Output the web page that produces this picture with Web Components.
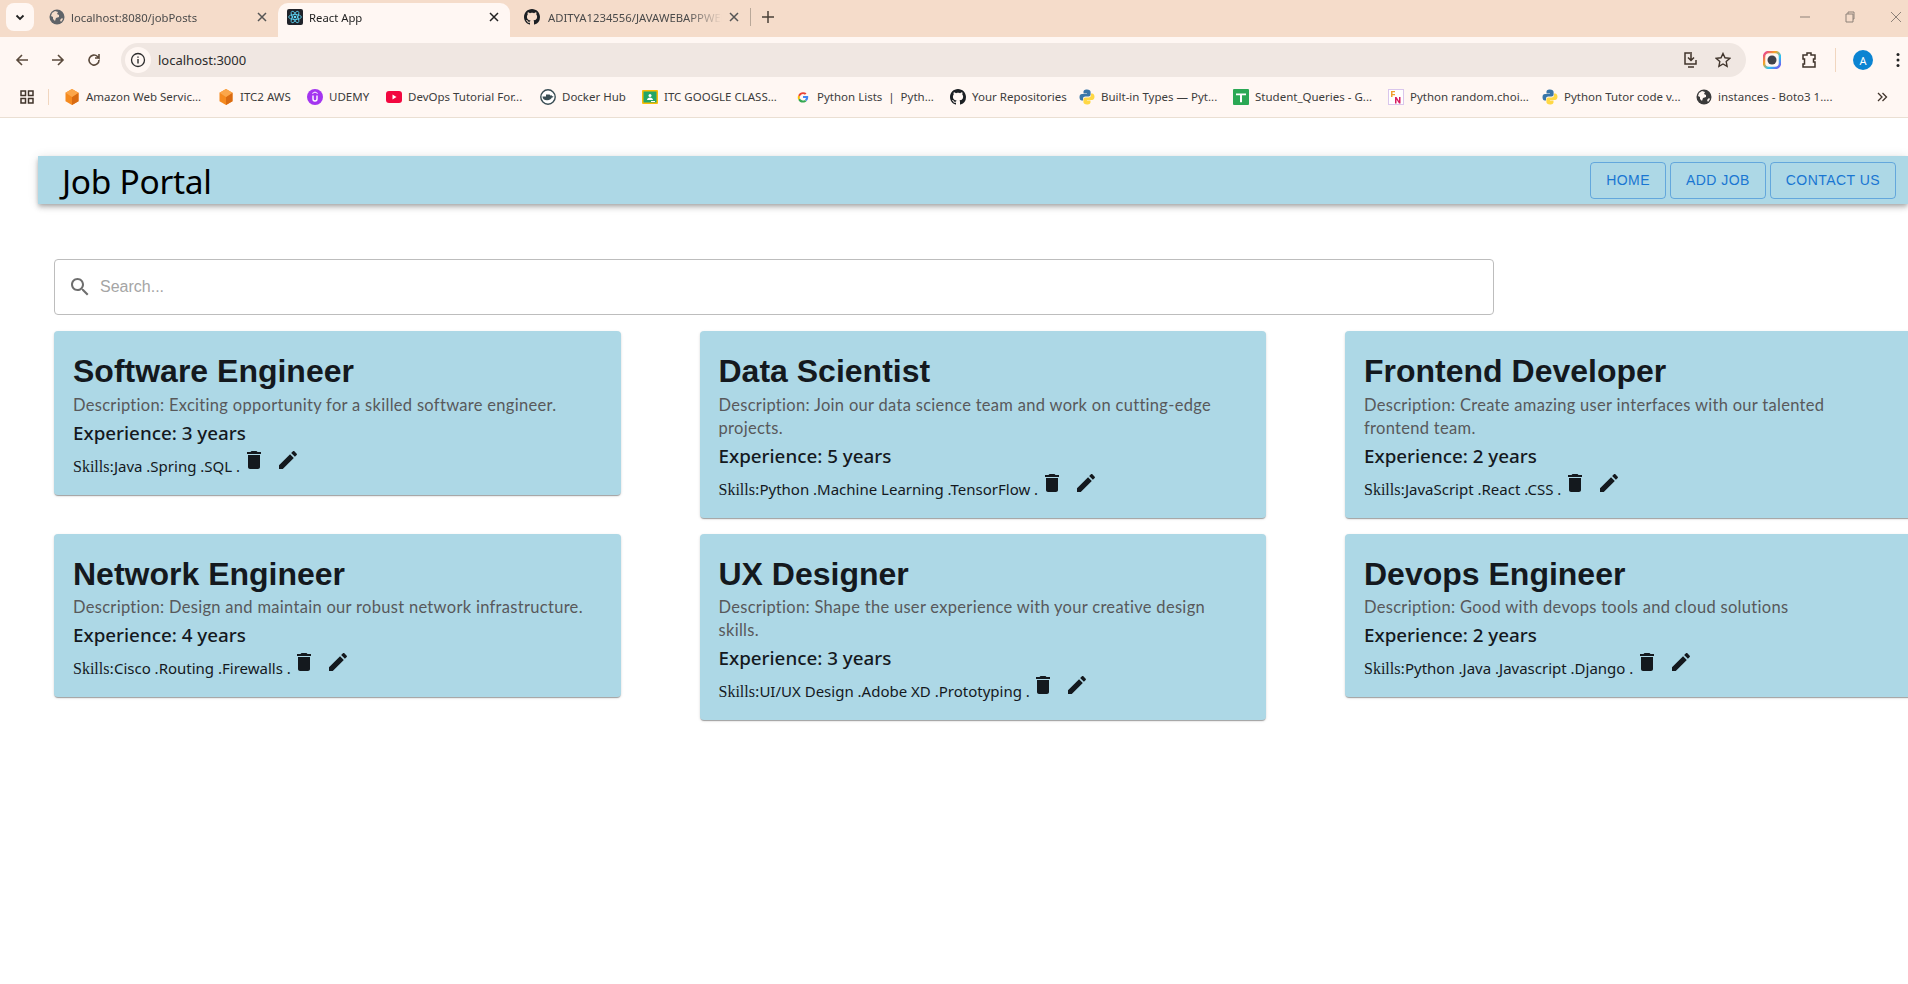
<!DOCTYPE html>
<html>
<head>
<meta charset="utf-8">
<title>React App</title>
<style>
html, body { margin: 0; padding: 0; background: #fff; overflow: hidden; height: 984px; }
body { font-family: "Liberation Sans", sans-serif; }
</style>
</head>
<body>
<browser-chrome></browser-chrome>
<job-page></job-page>

<script>
const ICONS = {
  globe: `<svg viewBox="0 0 16 16" width="16" height="16"><circle cx="8" cy="8" r="7.5" fill="#5f6368"/><path d="M3 4l3-2 3 1-1 2 2 1 0 2-3 1-1 3-2-2 0-2-2-1zM11 11l2-2 1 1-2 3z" fill="#f5dcca"/></svg>`,
  react: `<svg viewBox="0 0 16 16" width="16" height="16"><rect width="16" height="16" rx="2" fill="#20232a"/><g fill="none" stroke="#61dafb" stroke-width=".8"><ellipse cx="8" cy="8" rx="6.4" ry="2.5"/><ellipse cx="8" cy="8" rx="6.4" ry="2.5" transform="rotate(60 8 8)"/><ellipse cx="8" cy="8" rx="6.4" ry="2.5" transform="rotate(120 8 8)"/></g><circle cx="8" cy="8" r="1.3" fill="#61dafb"/></svg>`,
  github: `<svg viewBox="0 0 16 16" width="16" height="16"><path fill="#1b1f23" d="M8 0C3.58 0 0 3.58 0 8c0 3.54 2.29 6.53 5.47 7.59.4.07.55-.17.55-.38 0-.19-.01-.82-.01-1.49-2.01.37-2.53-.49-2.69-.94-.09-.23-.48-.94-.82-1.13-.28-.15-.68-.52-.01-.53.63-.01 1.08.58 1.23.82.72 1.21 1.87.87 2.33.66.07-.52.28-.87.51-1.07-1.78-.2-3.64-.89-3.64-3.95 0-.87.31-1.59.82-2.15-.08-.2-.36-1.02.08-2.12 0 0 .67-.21 2.2.82.64-.18 1.32-.27 2-.27s1.36.09 2 .27c1.53-1.04 2.2-.82 2.2-.82.44 1.1.16 1.92.08 2.12.51.56.82 1.27.82 2.15 0 3.07-1.87 3.75-3.65 3.95.29.25.54.73.54 1.48 0 1.07-.01 1.93-.01 2.2 0 .21.15.46.55.38A8.01 8.01 0 0016 8c0-4.42-3.58-8-8-8z"/></svg>`,
  aws: `<svg viewBox="0 0 16 16" width="16" height="16"><path d="M8 0l6.5 3.8v8.4L8 16l-6.5-3.8V3.8z" fill="#f58a1f"/><path d="M8 8l6.5-4.2v8.4L8 16z" fill="#d96b12"/><path d="M8 0l6.5 3.8L8 8 1.5 3.8z" fill="#fba64a"/></svg>`,
  udemy: `<svg viewBox="0 0 16 16" width="16" height="16"><circle cx="8" cy="8" r="8" fill="#a435f0"/><path d="M5.3 6.5v3.6a2.7 2.7 0 005.4 0V6.5H9.3v3.5a1.3 1.3 0 01-2.6 0V6.5z" fill="#fff"/><path d="M8 2.5l2.7 1.6v.9L8 3.5 5.3 5v-.9z" fill="#fff"/></svg>`,
  youtube: `<svg viewBox="0 0 16 16" width="16" height="16"><rect y="2" width="16" height="12" rx="3" fill="#f2073f"/><path d="M6.5 5.5v5l4-2.5z" fill="#fff"/></svg>`,
  docker: `<svg viewBox="0 0 16 16" width="16" height="16"><circle cx="8" cy="8" r="7.2" fill="#fff" stroke="#394d54" stroke-width="1.4"/><path d="M2.5 8.5h9.5c.8 0 1.2-.6 1.5-1-.4-.3-1-.4-1.5-.2-.1-.6-.5-1-.9-1.3l-.5.7-1-1.2H6v2H2.5c0 2.2 1.500 3.800 4.500 3.800 3 0 4.500-1.600 5-3z" fill="#394d54"/></svg>`,
  classroom: `<svg viewBox="0 0 16 16" width="16" height="16"><rect x="0" y="1" width="16" height="14" rx="1" fill="#fbbc04"/><rect x="1.500" y="2.500" width="13" height="11" fill="#25a667"/><circle cx="8" cy="6.500" r="1.500" fill="#fff"/><path d="M5 11c0-1.500 1.500-2.500 3-2.500s3 1 3 2.500z" fill="#fff"/><rect x="9" y="12" width="4" height="1" fill="#fff"/></svg>`,
  google: `<svg viewBox="0 0 16 16" width="16" height="16"><g transform="translate(1.600 1.600) scale(.8)"><path d="M14.500 8.200c0-.5 0-.9-.1-1.300H8v2.500h3.700c-.2.800-.6 1.500-1.300 2l2 1.600c1.300-1.200 2.100-2.900 2.100-4.800z" fill="#4285f4"/><path d="M8 15c1.800 0 3.300-.6 4.400-1.600l-2-1.600c-.6.400-1.400.7-2.400.7-1.800 0-3.300-1.200-3.800-2.800l-2.100 1.600C3.200 13.500 5.400 15 8 15z" fill="#34a853"/><path d="M4.200 9.700c-.3-.8-.3-1.600 0-2.400L2.100 5.700c-.9 1.700-.9 3.900 0 5.600z" fill="#fbbc05"/><path d="M8 4.300c1 0 1.800.3 2.500 1l1.900-1.900C11.300 2.500 9.800 2 8 2 5.400 2 3.200 3.500 2.100 5.700l2.100 1.600C4.700 5.600 6.200 4.300 8 4.300z" fill="#ea4335"/></g></svg>`,
  python: `<svg viewBox="0 0 16 16" width="16" height="16"><path d="M8 .5c-3 0-3.500 1.300-3.500 2.500v1.500H8V5H3C1.500 5 .5 6.200.5 8.200s1 3.300 2.300 3.300H4V9.700c0-1.300 1.100-2.200 2.300-2.200h3.300c1.100 0 2-.9 2-2V3C11.600 1.500 10.300.5 8 .5z" fill="#3a76a8"/><path d="M8 15.500c3 0 3.500-1.300 3.500-2.500v-1.500H8V11h5c1.500 0 2.500-1.200 2.500-3.200s-1-3.300-2.300-3.300H12v1.800c0 1.300-1.100 2.200-2.300 2.200H6.400c-1.100 0-2 .9-2 2V13c0 1.500 1.300 2.500 3.600 2.500z" fill="#ffd845"/></svg>`,
  sheets: `<svg viewBox="0 0 16 16" width="16" height="16"><rect width="16" height="16" rx="1" fill="#2aa854"/><path d="M3 4.500h10v1.800H9v7H7v-7H3z" fill="#fff"/></svg>`,
  pynative: `<svg viewBox="0 0 16 16" width="16" height="16"><rect x=".5" y=".5" width="15" height="15" fill="#fff" stroke="#d9c6ec"/><path d="M3 2h4v1.300H4.500V5H7v1.300H4.500V8H3z" fill="#f0a030"/><path d="M7 8h1.500l2.500 4V8h1.500v6.500H11L8.500 10.500v4H7z" fill="#d81b60"/></svg>`,
  boto: `<svg viewBox="0 0 16 16" width="16" height="16"><circle cx="8" cy="8" r="7.500" fill="#3a3a3a"/><path d="M3 4l3-2 3 1-1 2 2 1 0 2-3 1-1 3-2-2 0-2-2-1zM11 11l2-2 1 1-2 3z" fill="#fff7f3"/></svg>`
};

const MUI = {
  del: 'M6 19c0 1.100.9 2 2 2h8c1.100 0 2-.9 2-2V7H6v12zM19 4h-3.500l-1-1h-5l-1 1H5v2h14V4z',
  edit: 'M3 17.250V21h3.750L17.810 9.940l-3.750-3.750L3 17.250zM20.710 7.040c.39-.39.39-1.020 0-1.410l-2.340-2.340c-.39-.39-1.020-.39-1.410 0l-1.830 1.830 3.750 3.750 1.830-1.830z',
  search: 'M15.500 14h-.79l-.28-.27C15.410 12.590 16 11.110 16 9.500 16 5.910 13.090 3 9.500 3S3 5.910 3 9.500 5.910 16 9.500 16c1.610 0 3.090-.59 4.230-1.570l.27.28v.79l5 4.990L20.490 19l-4.990-5zm-6 0C7.010 14 5 11.990 5 9.500S7.010 5 9.500 5 14 7.010 14 9.500 11.990 14 9.500 14z'
};

class BrowserTab extends HTMLElement {
  connectedCallback() {
    const active = this.hasAttribute('active');
    const root = this.attachShadow({ mode: 'open' });
    root.innerHTML = `
    <style>
    :host {
      display: flex;
      align-items: center;
      box-sizing: border-box;
      height: 34px;
      margin-top: 3px;
      padding: 0 0 6px 9px;
      width: var(--tab-width);
      font-size: 11.300px;
      color: ${active ? '#1f1f1f' : '#4a4a4a'};
    }
    :host([active]) {
      background: #fff7f3;
      border-radius: 10px 10px 0 0;
    }
    .title {
      flex: 1;
      margin-left: 6px;
      white-space: nowrap;
      overflow: hidden;
      -webkit-mask-image: linear-gradient(to right, #000 80%, transparent);
    }
    .close { width: 12px; height: 12px; margin-right: 10px; margin-left: 6px; }
    </style>
    ${ICONS[this.getAttribute('icon')]}
    <span class="title"><slot></slot></span>
    <svg class="close" viewBox="0 0 12 12"><path d="M2 2l8 8M10 2l-8 8" stroke="${active ? '#222' : '#555'}" stroke-width="1.500" fill="none"/></svg>`;
  }
}
customElements.define('browser-tab', BrowserTab);

class BookmarkItem extends HTMLElement {
  connectedCallback() {
    const root = this.attachShadow({ mode: 'open' });
    root.innerHTML = `
    <style>
    :host {
      display: flex;
      align-items: center;
      gap: 6px;
      width: ${this.getAttribute('w')}px;
      flex: none;
      font-size: 11.500px;
      color: #3c3c3c;
      white-space: nowrap;
    }
    svg { flex: none; }
    </style>
    ${ICONS[this.getAttribute('icon')]}<slot></slot>`;
  }
}
customElements.define('bookmark-item', BookmarkItem);

const chromeTemplate = document.createElement('template');
chromeTemplate.innerHTML = `
<style>
:host {
  display: block;
  font-family: "Noto Sans", "Open Sans", sans-serif;
  --bar: #fff7f3;
}
.tabstrip {
  display: flex;
  height: 37px;
  background: #f5dcca;
  align-items: flex-start;
}
.tab-list-btn {
  width: 28px;
  height: 28px;
  margin: 3px 8px 0 6px;
  background: #fff7f3;
  border-radius: 8px;
  display: flex;
  align-items: center;
  justify-content: center;
  flex: none;
}
.sep { width: 1px; height: 18px; background: #b9a899; margin: 8px 10px 0 0; }
.new-tab { margin-top: 10px; }
.win { margin-left: auto; display: flex; gap: 33px; padding: 10px 5px 0 0; }
.toolbar {
  display: flex;
  align-items: center;
  height: 47px;
  background: var(--bar);
  padding: 0 0 1px 14px;
  box-sizing: border-box;
}
.nav { margin-right: 20px; flex: none; }
.omni {
  flex: none;
  width: 1625px;
  height: 34px;
  margin-left: -1px;
  background: #f0e7e2;
  border-radius: 17px;
  display: flex;
  align-items: center;
  box-sizing: border-box;
  padding: 0 15px 0 4px;
  font-size: 13px;
  color: #2c2c2c;
}
.info {
  width: 26px;
  height: 26px;
  border-radius: 50%;
  background: #fff7f3;
  display: flex;
  align-items: center;
  justify-content: center;
  margin-right: 7px;
}
.omni-end { margin-left: auto; display: flex; gap: 15px; align-items: center; }
.tools { display: flex; align-items: center; margin-left: 17px; }
.avatar {
  width: 20px;
  height: 20px;
  border-radius: 50%;
  background: #0b84d2;
  color: #fff;
  font-size: 11px;
  display: flex;
  align-items: center;
  justify-content: center;
}
.bookmarks {
  display: flex;
  align-items: center;
  height: 34px;
  background: var(--bar);
  border-bottom: 1px solid #eadfd3;
  box-sizing: border-box;
  padding: 0 0 8px 19px;
}
.apps { margin-right: 13px; flex: none; }
.vline { width: 1px; height: 16px; background: #f1d6bf; margin-right: 15px; flex: none; }
</style>
<div class="tabstrip">
  <div class="tab-list-btn">
    <svg width="12" height="12" viewBox="0 0 12 12"><path d="M2.500 4.500L6 8l3.500-3.500" fill="none" stroke="#222" stroke-width="1.800"/></svg>
  </div>
  <browser-tab icon="globe" style="--tab-width:236px;padding-left:7px">localhost:8080/jobPosts</browser-tab>
  <browser-tab icon="react" active style="--tab-width:232px">React App</browser-tab>
  <browser-tab icon="github" style="--tab-width:240px;padding-left:14px"><span style="padding-left:2px">ADITYA1234556/JAVAWEBAPPWEB</span></browser-tab>
  <div class="sep"></div>
  <svg class="new-tab" width="14" height="14" viewBox="0 0 14 14"><path d="M7 1v12M1 7h12" stroke="#4a4038" stroke-width="1.500"/></svg>
  <div class="win">
    <svg width="12" height="14" viewBox="0 0 12 14"><path d="M1 7h10" stroke="#8d8178"/></svg>
    <svg width="12" height="14" viewBox="0 0 12 14"><path d="M2 4h7v8H2zM4 4V2h6v7H9" fill="none" stroke="#8d8178"/></svg>
    <svg width="14" height="14" viewBox="0 0 14 14"><path d="M2 2l10 10M12 2L2 12" stroke="#8d8178"/></svg>
  </div>
</div>
<div class="toolbar">
  <svg class="nav" width="16" height="16" viewBox="0 0 16 16"><path d="M14 8H3M8 3L3 8l5 5" fill="none" stroke="#5b4a3c" stroke-width="1.600"/></svg>
  <svg class="nav" width="16" height="16" viewBox="0 0 16 16"><path d="M2 8h11M8 3l5 5-5 5" fill="none" stroke="#5b4a3c" stroke-width="1.600"/></svg>
  <svg class="nav" width="16" height="16" viewBox="0 0 16 16"><path d="M13 8a5 5 0 11-1.500-3.500L13 6V2M13 6H9" fill="none" stroke="#5b4a3c" stroke-width="1.600"/></svg>
  <div class="omni">
    <div class="info"><svg width="16" height="16" viewBox="0 0 16 16"><circle cx="8" cy="8" r="6.500" fill="none" stroke="#2c2c2c" stroke-width="1.300"/><path d="M8 7v4.500M8 4.500v1.300" stroke="#2c2c2c" stroke-width="1.400"/></svg></div>
    localhost:3000
    <div class="omni-end">
      <svg width="18" height="18" viewBox="0 0 18 18"><path d="M8 2H3v11h11V9M9 1v8M6 6.500L9 9.500l3-3M6 16h6" fill="none" stroke="#40342b" stroke-width="1.500"/></svg>
      <svg width="16" height="16" viewBox="0 0 16 16"><path d="M8 1.500l2 4.300 4.700.6-3.500 3.200.9 4.700L8 12l-4.100 2.300.9-4.700L1.300 6.400 6 5.800z" fill="none" stroke="#40342b" stroke-width="1.400"/></svg>
    </div>
  </div>
  <div class="tools">
    <svg width="18" height="18" viewBox="0 0 18 18" style="margin-right:20px"><rect x="1" y="1" width="16" height="16" rx="5" fill="none" stroke="url(#rb)" stroke-width="2.500"/><defs><linearGradient id="rb" x1="0" y1="0" x2="1" y2="1"><stop offset="0" stop-color="#e6399b"/><stop offset=".35" stop-color="#f5a623"/><stop offset=".65" stop-color="#27c4f5"/><stop offset="1" stop-color="#7b4cf0"/></linearGradient></defs><circle cx="9" cy="9" r="4.500" fill="#40424a"/></svg>
    <svg width="16" height="18" viewBox="0 0 16 18" style="margin-right:18px"><path d="M2 4h4V2h4v2h4v4h-1.500v3H14v5H2v-3h1.500V8H2z" fill="none" stroke="#40342b" stroke-width="1.500"/></svg>
    <div style="width:1px;height:24px;background:#f1d6bf;margin-right:17px"></div>
    <div class="avatar">A</div>
    <svg width="4" height="16" viewBox="0 0 4 16" style="margin-left:23px"><circle cx="2" cy="2.500" r="1.500" fill="#222"/><circle cx="2" cy="8" r="1.500" fill="#222"/><circle cx="2" cy="13.500" r="1.500" fill="#222"/></svg>
  </div>
</div>
<div class="bookmarks">
  <svg class="apps" width="16" height="16" viewBox="0 0 16 16"><path d="M2 2h4.500v4.500H2zM9.500 2H14v4.500H9.500zM2 9.500h4.500V14H2zM9.500 9.500H14V14H9.500z" fill="none" stroke="#40342b" stroke-width="1.500"/></svg>
  <div class="vline"></div>
  <bookmark-item icon="aws" w="154">Amazon Web Servic...</bookmark-item>
  <bookmark-item icon="aws" w="89">ITC2 AWS</bookmark-item>
  <bookmark-item icon="udemy" w="79">UDEMY</bookmark-item>
  <bookmark-item icon="youtube" w="154">DevOps Tutorial For...</bookmark-item>
  <bookmark-item icon="docker" w="102">Docker Hub</bookmark-item>
  <bookmark-item icon="classroom" w="153">ITC GOOGLE CLASS...</bookmark-item>
  <bookmark-item icon="google" w="155">Python Lists&nbsp;&nbsp;|&nbsp;&nbsp;Pyth...</bookmark-item>
  <bookmark-item icon="github" w="129">Your Repositories</bookmark-item>
  <bookmark-item icon="python" w="154">Built-in Types — Pyt...</bookmark-item>
  <bookmark-item icon="sheets" w="155">Student_Queries - G...</bookmark-item>
  <bookmark-item icon="pynative" w="154">Python random.choi...</bookmark-item>
  <bookmark-item icon="python" w="154">Python Tutor code v...</bookmark-item>
  <bookmark-item icon="boto" w="150">instances - Boto3 1....</bookmark-item>
  <svg width="12" height="12" viewBox="0 0 12 12" style="margin-left:30px"><path d="M2 2l4 4-4 4M6.500 2l4 4-4 4" fill="none" stroke="#40342b" stroke-width="1.300"/></svg>
</div>`;

class BrowserChrome extends HTMLElement {
  constructor() {
    super();
    this.root = this.attachShadow({ mode: 'open' });
    this.root.appendChild(chromeTemplate.content.cloneNode(true));
  }
}
customElements.define('browser-chrome', BrowserChrome);

class NavButton extends HTMLElement {
  constructor() {
    super();
    const root = this.attachShadow({ mode: 'open' });
    root.innerHTML = `
    <style>
    :host {
      display: block;
      box-sizing: border-box;
      padding: 5px 15px;
      border: 1px solid rgba(25, 118, 210, .5);
      border-radius: 4px;
      font: 14px/25px "Liberation Sans", sans-serif;
      letter-spacing: .45px;
      color: #1976d2;
      text-transform: uppercase;
    }
    </style>
    <slot></slot>`;
  }
}
customElements.define('nav-button', NavButton);

const headerTemplate = document.createElement('template');
headerTemplate.innerHTML = `
<style>
:host {
  display: flex;
  align-items: center;
  justify-content: space-between;
  height: 48px;
  margin: 38px 0 0 38px;
  padding: 0 12px 0 24px;
  background: #add8e6;
  box-shadow: 0 2px 4px -1px rgba(0,0,0,.2), 0 4px 5px 0 rgba(0,0,0,.14), 0 1px 10px 0 rgba(0,0,0,.12);
}
h1 {
  margin: 0;
  font: 400 33.500px/48px "Noto Sans", sans-serif;
  letter-spacing: -.3px;
  color: #000;
  padding-top: 2px;
}
nav { display: flex; gap: 4px; }
</style>
<h1>Job Portal</h1>
<nav>
  <nav-button>Home</nav-button>
  <nav-button>Add Job</nav-button>
  <nav-button>Contact Us</nav-button>
</nav>`;

class JobHeader extends HTMLElement {
  constructor() {
    super();
    this.attachShadow({ mode: 'open' }).appendChild(headerTemplate.content.cloneNode(true));
  }
}
customElements.define('job-header', JobHeader);

class SearchBox extends HTMLElement {
  constructor() {
    super();
    const root = this.attachShadow({ mode: 'open' });
    root.innerHTML = `
    <style>
    :host {
      display: flex;
      align-items: center;
      box-sizing: border-box;
      width: 1440px;
      height: 56px;
      margin: 55px 0 16px 54px;
      padding-left: 13px;
      border: 1px solid #bdbdbd;
      border-radius: 4px;
      background: #fff;
    }
    svg { width: 24px; height: 24px; fill: #6e6e6e; margin-right: 8px; }
    span { font: 16px "Liberation Sans", sans-serif; color: #a5a5a5; }
    </style>
    <svg viewBox="0 0 24 24"><path d="${MUI.search}"/></svg>
    <span>Search...</span>`;
  }
}
customElements.define('search-box', SearchBox);

const cardTemplate = document.createElement('template');
cardTemplate.innerHTML = `
<style>
:host {
  display: block;
  box-sizing: border-box;
  padding: 20px 19px 14.500px;
  background: #add8e6;
  border-radius: 4px;
  box-shadow: 0 2px 1px -1px rgba(0,0,0,.2), 0 1px 1px 0 rgba(0,0,0,.14), 0 1px 3px 0 rgba(0,0,0,.12);
  color: #14191e;
}
h2 {
  margin: 0 0 2.500px;
  font: bold 32px/40px "Liberation Sans", sans-serif;
}
.desc {
  font: 16.500px/23px Lato, sans-serif;
  letter-spacing: .3px;
  color: #58595b;
}
.exp {
  margin-top: 2px;
  font: 500 18.800px/28px "Noto Sans", sans-serif;
}
.skills {
  display: flex;
  align-items: flex-start;
  height: 33.500px;
  font: 15px/24px "Noto Sans", sans-serif;
  white-space: nowrap;
}
.skills .text { margin-top: 7px; }
.label { font: 16px/24px "Liberation Serif", serif; }
svg { width: 24px; height: 24px; fill: #14191e; flex: none; margin-top: 1px; }
.del { margin-left: 1.500px; }
.edit { margin-left: 10px; }
</style>
<h2 id="title"></h2>
<div class="desc" id="desc"></div>
<div class="exp" id="exp"></div>
<div class="skills">
  <span class="text"><span class="label">Skills:</span><span id="skills"></span></span>
  <svg class="del" viewBox="0 0 24 24"><path d="${MUI.del}"/></svg>
  <svg class="edit" viewBox="0 0 24 24"><path d="${MUI.edit}"/></svg>
</div>`;

class JobCard extends HTMLElement {
  constructor() {
    super();
    this.root = this.attachShadow({ mode: 'open' });
    this.root.appendChild(cardTemplate.content.cloneNode(true));
  }

  set post(post) {
    this.root.getElementById('title').textContent = post.title;
    this.root.getElementById('desc').textContent = 'Description: ' + post.desc;
    this.root.getElementById('exp').textContent = 'Experience: ' + post.exp + ' years';
    this.root.getElementById('skills').textContent = post.skills.map(s => s + ' .').join('');
  }
}
customElements.define('job-card', JobCard);

const POSTS = [
  { title: 'Software Engineer', desc: 'Exciting opportunity for a skilled software engineer.', exp: 3, skills: ['Java', 'Spring', 'SQL'] },
  { title: 'Data Scientist', desc: 'Join our data science team and work on cutting-edge projects.', exp: 5, skills: ['Python', 'Machine Learning', 'TensorFlow'] },
  { title: 'Frontend Developer', desc: 'Create amazing user interfaces with our talented frontend team.', exp: 2, skills: ['JavaScript', 'React', 'CSS'] },
  { title: 'Network Engineer', desc: 'Design and maintain our robust network infrastructure.', exp: 4, skills: ['Cisco', 'Routing', 'Firewalls'] },
  { title: 'UX Designer', desc: 'Shape the user experience with your creative design skills.', exp: 3, skills: ['UI/UX Design', 'Adobe XD', 'Prototyping'] },
  { title: 'Devops Engineer', desc: 'Good with devops tools and cloud solutions', exp: 2, skills: ['Python', 'Java', 'Javascript', 'Django'] }
];

class JobPage extends HTMLElement {
  constructor() {
    super();
    const root = this.attachShadow({ mode: 'open' });
    root.innerHTML = `
    <style>
    :host { display: block; }
    .grid {
      display: grid;
      grid-template-columns: repeat(3, 566.500px);
      column-gap: 79px;
      row-gap: 16px;
      align-items: start;
      margin-left: 54px;
    }
    </style>
    <job-header></job-header>
    <search-box></search-box>
    <div class="grid" id="grid"></div>`;
    const grid = root.getElementById('grid');
    POSTS.forEach(p => {
      const card = document.createElement('job-card');
      card.post = p;
      grid.appendChild(card);
    });
  }
}
customElements.define('job-page', JobPage);
</script>
</body>
</html>
